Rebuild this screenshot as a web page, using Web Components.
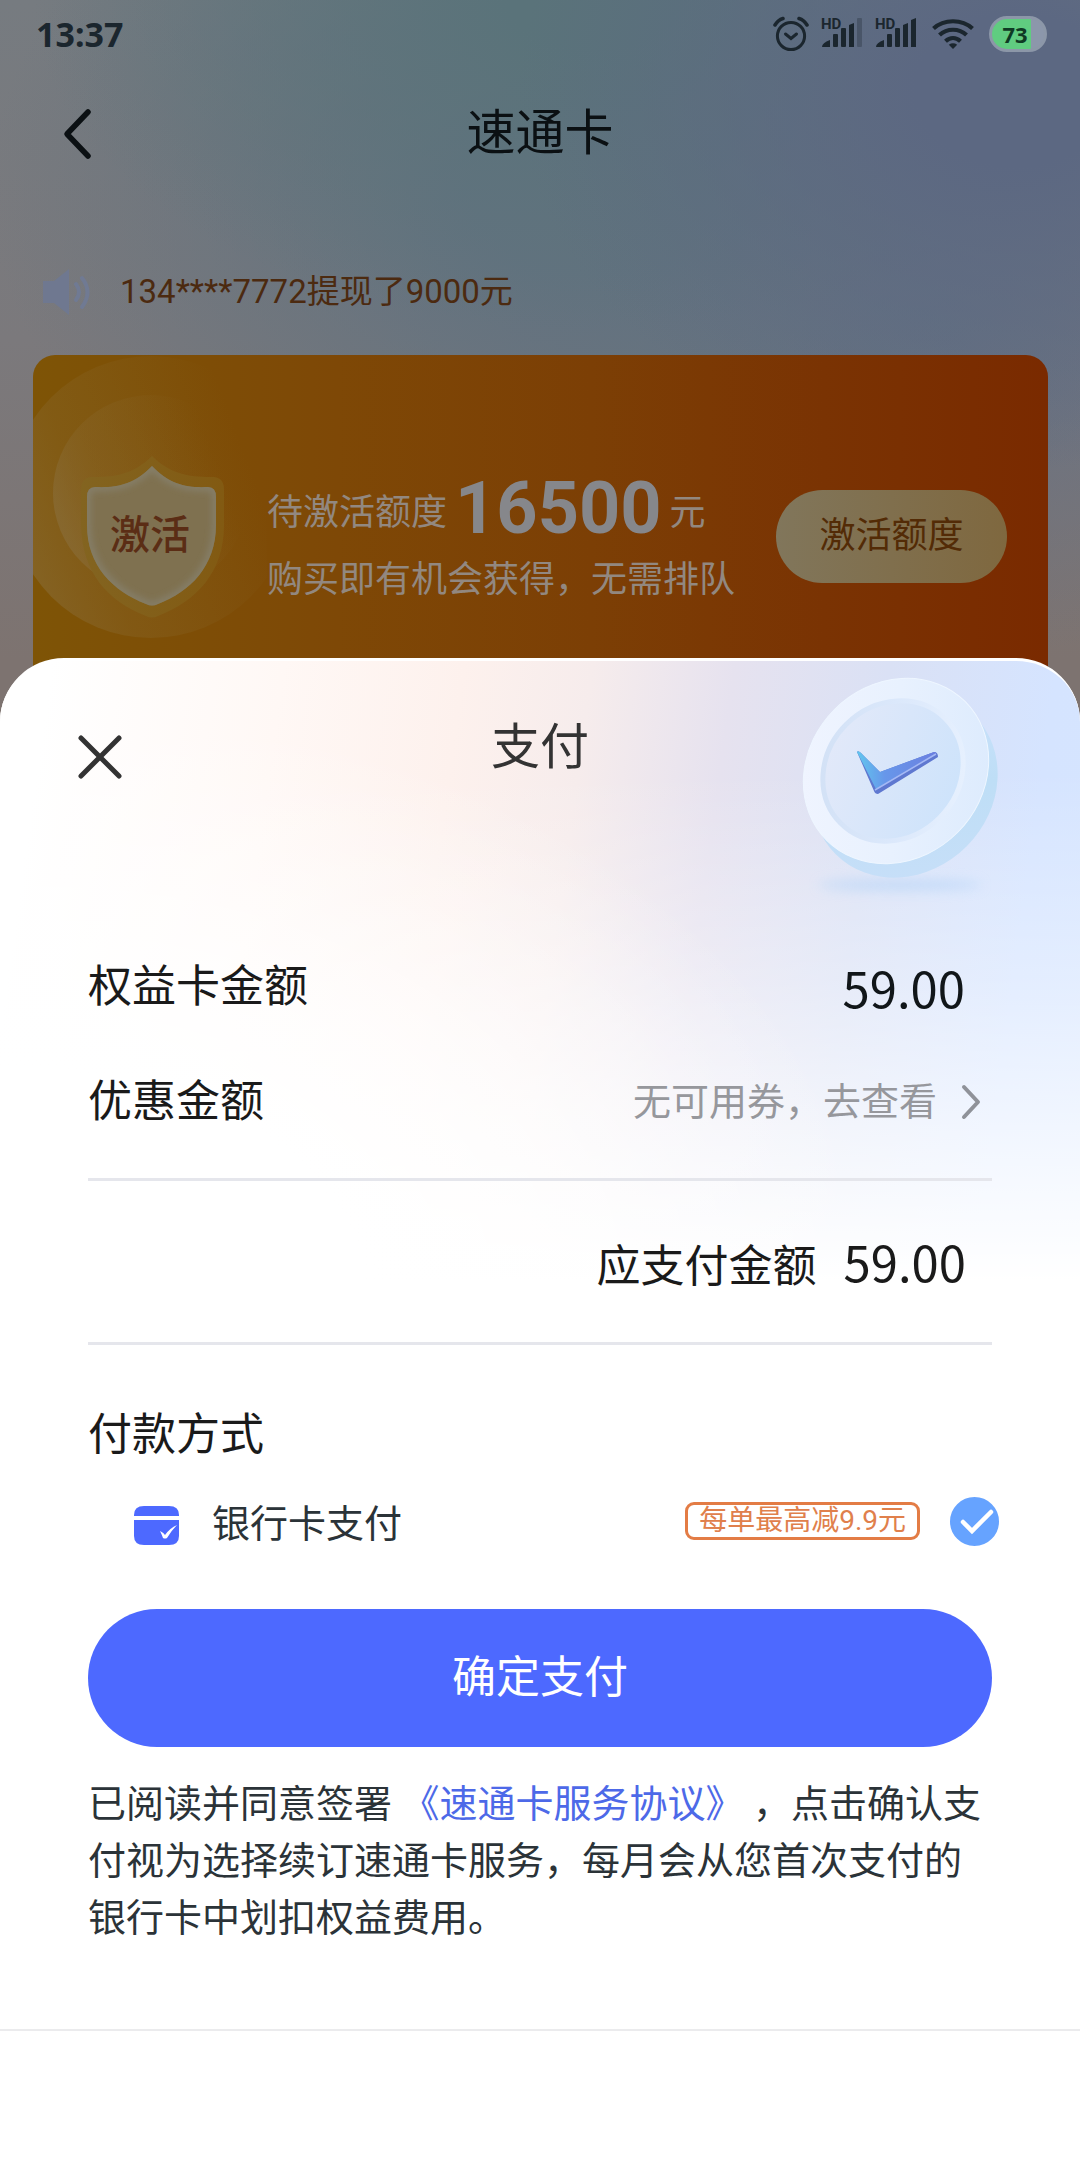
<!DOCTYPE html>
<html lang="zh-CN">
<head>
<meta charset="utf-8">
<meta name="viewport" content="width=device-width, initial-scale=1">
<title>速通卡</title>
<style>
  html, body { margin: 0; height: 100%; }
  body { font-family: Roboto, "Noto Sans CJK SC", sans-serif; text-spacing-trim: space-all; background: #fff; }
</style>
</head>
<body>
<speed-app>
  <status-bar></status-bar>
  <nav-bar>速通卡</nav-bar>
  <notice-bar>134****7772提现了9000元</notice-bar>
  <quota-card amount="16500"></quota-card>
  <pay-sheet slot="sheet" heading="支付">
    <amount-row>
      <span slot="label">权益卡金额</span>
      <span slot="value">59.00</span>
    </amount-row>
    <coupon-row label="优惠金额">无可用券，去查看</coupon-row>
    <total-row label="应支付金额">59.00</total-row>
    <pay-method heading="付款方式" tag="每单最高减9.9元">银行卡支付</pay-method>
    <confirm-button>确定支付</confirm-button>
    <pay-terms></pay-terms>
  </pay-sheet>
</speed-app>

<script>
const define = (name, render) => customElements.define(name, class extends HTMLElement {
  connectedCallback() {
    if (this.shadowRoot) return;
    this.attachShadow({ mode: "open" }).innerHTML = render(this);
  }
});

define("speed-app", () => `
<style>
  :host {
    display: block; position: relative; min-height: 100vh; overflow: hidden;
    background:
      radial-gradient(46% 380px at 94% 90px, #5c6882 20%, #5c688200),
      radial-gradient(52% 330px at 55% 0, #5a737a 15%, #5a737a00),
      radial-gradient(56% 420px at 55% 190px, #62727f 20%, #62727f00),
      radial-gradient(50% 340px at 85% 320px, #657083, #65708300),
      linear-gradient(#767b80, #7b797c 340px, #7d7370 660px);
  }
</style>
<slot></slot>
<slot name="sheet"></slot>`);

define("status-bar", () => `
<style>
  :host { display: flex; align-items: center; justify-content: space-between; height: 68px; padding: 0 33px 0 36px; color: #1b262e; }
  time { font: 700 34px/48px "Noto Sans", sans-serif; }
  .icons { display: flex; align-items: center; gap: 12px; }
  svg { display: block; }
  .battery { display: grid; place-items: center; box-sizing: border-box; width: 58px; height: 36px; border-radius: 18px; border: 3px solid #8c97a8;
    background: linear-gradient(90deg, #60cc80 75%, #8c97ab 75%); padding-right: 6px;
    font: 700 22px/30px "Noto Sans", sans-serif; color: #0f3a24; }
  .hd { font: 700 15px Roboto, sans-serif; }
</style>
<time>13:37</time>
<div class="icons">
  <svg width="36" height="36" viewBox="0 0 36 36" fill="none" stroke="#1b262e" stroke-width="3" stroke-linecap="round">
    <circle cx="18" cy="20" r="13.6"/><path d="M2 9 Q5 4 10 2.500M34 9 Q31 4 26 2.500" stroke-width="3.500"/><path d="M12.500 18 L18 22.500 L23.500 18"/>
  </svg>
  <svg width="42" height="44" viewBox="0 0 42 44" fill="#1b262e">
    <text class="hd" x="0" y="17">HD</text>
    <path d="M1 35 Q1 31 9 28 V35Z"/><rect x="12" y="22" width="5" height="13" rx="1"/><rect x="20" y="16" width="5" height="19" rx="1"/><path d="M28 13 L33 11 V35 H28Z"/><rect x="36" y="6" width="5" height="29" rx="1" opacity=".3"/>
  </svg>
  <svg width="42" height="44" viewBox="0 0 42 44" fill="#1b262e">
    <text class="hd" x="0" y="17">HD</text>
    <path d="M1 35 Q1 31 9 28 V35Z"/><rect x="12" y="22" width="5" height="13" rx="1"/><rect x="20" y="16" width="5" height="19" rx="1"/><path d="M28 13 L33 11 V35 H28Z"/><path d="M36 8 L41 6 V35 H36Z"/>
  </svg>
  <svg width="48" height="32" viewBox="0 0 48 32" fill="none" stroke="#1b262e" stroke-width="4.200">
    <path d="M4.500 10.500 C15 .8 33 .8 43.500 10.500"/><path d="M10.500 17 C18 10 30 10 37.500 17"/><path d="M16.500 23.200 C21 19 27 19 31.500 23.200"/><path d="M24 31 L19.800 26.700 Q24 23.800 28.200 26.700Z" fill="#1b262e" stroke="none"/>
  </svg>
  <div class="battery">73</div>
</div>`);

define("nav-bar", () => `
<style>
  :host { display: grid; grid-template-columns: 1fr auto 1fr; align-items: center; height: 132px; color: #0b1013; }
  h1 { margin: 0; font-size: 49px; line-height: 64px; font-weight: 400; }
  button { justify-self: start; margin-left: 48px; width: 58px; height: 64px; padding: 0; border: 0; background: none; display: grid; place-items: center; color: inherit; }
</style>
<button type="button" aria-label="返回">
  <svg width="30" height="52" viewBox="0 0 30 52" fill="none" stroke="currentColor" stroke-width="5.500" stroke-linecap="round" stroke-linejoin="round"><path d="M26 4 L5 26 L26 48"/></svg>
</button>
<h1><slot></slot></h1>`);

define("notice-bar", () => `
<style>
  :host { display: flex; align-items: center; gap: 28px; margin: 64px 40px 35px; height: 56px; font-size: 33px; line-height: 48px; color: #4c2a10; }
</style>
<svg width="52" height="50" viewBox="0 0 52 50" fill="none" stroke="#707a93" stroke-width="4" stroke-linecap="round">
  <path d="M3 14 H14 L29 2 V48 L14 36 H3Z" fill="#6f7890" stroke="none"/>
  <path d="M36 17 Q42 25 36 33M42 11 Q53 25 42 40"/>
</svg>
<span><slot></slot></span>`);

define("quota-card", el => `
<style>
  :host { display: flex; align-items: center; margin: 0 32px 0 33px; height: 362px; padding-right: 41px; border-radius: 22px; overflow: hidden;
    background: linear-gradient(90deg, #7e5406, #7e4806 30%, #7c3f05 55%, #7a3303 78%, #7a2a00); }
  .shield { flex: none; display: grid; place-items: center; width: 234px; height: 362px; }
  .shield > * { grid-area: 1 / 1; }
  .shield b { font-size: 40px; line-height: 50px; font-weight: 500; color: #5b2d15; }
  .info { padding-bottom: 4px; font-family: "Noto Sans CJK SC", sans-serif; font-size: 36px; line-height: 50px; color: #928880; white-space: nowrap; }
  .quota { display: flex; align-items: center; gap: 8px; height: 84px; }
  .quota strong { font: 700 72px/84px Roboto, sans-serif; color: #86878b; }
  button { margin-left: auto; width: 231px; height: 93px; padding: 0; border: 0; border-radius: 47px; background: linear-gradient(90deg, #81765b, #7f683f);
    font: 400 36px/50px Roboto, "Noto Sans CJK SC", sans-serif; color: #532b06; }
</style>
<div class="shield">
  <svg width="234" height="362" viewBox="0 0 234 362">
    <defs>
      <linearGradient id="ring" x1="0" y1=".55" x2=".8" y2=".25"><stop offset="0" stop-color="#8c7446" stop-opacity=".45"/><stop offset=".3" stop-color="#8a6a30" stop-opacity=".32"/><stop offset="1" stop-color="#8a6a30" stop-opacity="0"/></linearGradient>
      <linearGradient id="hem" x1="0" y1="0" x2="1" y2="0"><stop offset="0" stop-color="#836420"/><stop offset="1" stop-color="#825a12"/></linearGradient>
      <clipPath id="cut"><path d="M119 111 C137 130 155 133 175 132 Q183 132 183 142 V170 C183 211 157 237 125 249 Q119 252 113 249 C80 236 54 211 54 170 V142 Q54 132 62 132 C82 133 101 130 119 111Z"/></clipPath>
      <filter id="soft"><feGaussianBlur stdDeviation="3"/></filter>
    </defs>
    <circle cx="118" cy="142" r="141" fill="url(#ring)"/>
    <circle cx="118" cy="138" r="98" fill="url(#ring)"/>
    <path d="M119 101 C139 121 160 122 181 122 Q191 123 191 135 V170 C191 218 163 246 125 261 Q119 264 113 261 C75 246 49 218 48 170 V135 Q48 123 58 122 C79 122 99 121 119 101Z" fill="url(#hem)"/>
    <g clip-path="url(#cut)">
      <path d="M40 90 H200 V270 H40Z" fill="#7f7150"/>
      <path d="M119 111 C137 130 155 133 175 132 Q183 132 183 142 V170 C183 211 157 237 125 249 Q119 252 113 249 C80 236 54 211 54 170 V142 Q54 132 62 132 C82 133 101 130 119 111Z" fill="none" stroke="#857e68" stroke-width="8" filter="url(#soft)"/>
    </g>
  </svg>
  <b>激活</b>
</div>
<div class="info">
  <div class="quota"><span>待激活额度</span><strong>${el.getAttribute("amount")}</strong><span>元</span></div>
  <div>购买即有机会获得，无需排队</div>
</div>
<button type="button">激活额度</button>`);

define("pay-sheet", el => `
<style>
  :host { display: block; position: absolute; left: 0; right: 0; bottom: 0; box-sizing: border-box; border-top: 3px solid #fff; border-radius: 64px 64px 0 0; overflow: hidden; color: #1a1a1a;
    background:
      radial-gradient(78% 600px at 4% 640px, #fff 38%, #fff0),
      linear-gradient(#fff0, #fff0 110px, #ffffff59 320px, #fff 620px),
      linear-gradient(98deg, #fff 4%, #fff8f5 22%, #fdf1ed 36%, #f6ecec 46%, #e6e2ef 57%, #dae1f5 69%, #d5e4ff 82%, #d6e6ff) #fff; }
  header { display: grid; grid-template-columns: 1fr auto 1fr; align-items: start; padding-top: 55px; height: 213px; color: #333; }
  h2 { margin: 0; font-size: 49px; line-height: 64px; font-weight: 400; }
  button { justify-self: start; margin-left: 68px; width: 64px; height: 82px; padding: 0; border: 0; background: none; display: grid; place-items: center; color: inherit; }
  .medal { position: absolute; top: 11px; right: 64px; }
  main { padding: 0 88px; }
  footer { margin-top: 82px; height: 129px; border-top: 2px solid #ebebed; }
</style>
<svg class="medal" width="216" height="234" viewBox="0 0 216 234" aria-hidden="true">
  <defs>
    <linearGradient id="rim" x1="0" y1="0" x2="1" y2="1"><stop offset="0" stop-color="#f2f5ff"/><stop offset=".5" stop-color="#e8f1fe"/><stop offset="1" stop-color="#d9e9fd"/></linearGradient>
    <linearGradient id="edge" x1="0" y1="1" x2="1" y2="0"><stop offset="0" stop-color="#c9dff9"/><stop offset=".5" stop-color="#bedef6"/><stop offset="1" stop-color="#d0e3fe"/></linearGradient>
    <linearGradient id="dish" x1=".2" y1="0" x2=".7" y2="1"><stop offset="0" stop-color="#e3e9f9"/><stop offset="1" stop-color="#cde3fb"/></linearGradient>
    <linearGradient id="lip" x1="0" y1="0" x2="1" y2="1"><stop offset="0" stop-color="#d0dff4"/><stop offset=".5" stop-color="#dbe8fb"/><stop offset="1" stop-color="#eaf3ff"/></linearGradient>
    <linearGradient id="tick" x1="0" y1="0" x2="1" y2="0"><stop offset="0" stop-color="#62c6ee"/><stop offset=".35" stop-color="#6797ea"/><stop offset="1" stop-color="#6b7fe0"/></linearGradient>
    <filter id="haze" x="-20%" y="-100%" width="140%" height="300%"><feGaussianBlur stdDeviation="6"/></filter>
  </defs>
  <ellipse cx="100" cy="213" rx="82" ry="6" fill="#b5d4f7" opacity=".6" filter="url(#haze)"/>
  <ellipse cx="105" cy="113" rx="98" ry="87" transform="rotate(-45 105 113)" fill="url(#edge)"/>
  <ellipse cx="96" cy="99" rx="98" ry="87" transform="rotate(-45 96 99)" fill="url(#rim)" stroke="#eef6ff" stroke-width="1"/>
  <ellipse cx="93" cy="99" rx="74" ry="66" transform="rotate(-45 93 99)" fill="url(#dish)" stroke="url(#lip)" stroke-width="5"/>
  <path d="M57 80 Q58 78 61 81 L80 100 L134 80 Q138 80 138 85 L78 122 Q75 122 74 119Z" fill="#5f78d0"/>
  <path d="M57 80 Q58 78 61 81 L80 100 L134 80 Q137 80 136 82 L76 117Z" fill="url(#tick)"/>
  <path d="M75 118 L136 82" stroke="#a5b9f5" stroke-width="1.500"/>
</svg>
<header>
  <button type="button" aria-label="关闭">
    <svg width="46" height="46" viewBox="0 0 46 46" fill="none" stroke="currentColor" stroke-width="5" stroke-linecap="round"><path d="M4 4 L42 42M42 4 L4 42"/></svg>
  </button>
  <h2>${el.getAttribute("heading")}</h2>
</header>
<main><slot></slot></main>
<footer></footer>`);

define("amount-row", () => `
<style>
  :host { display: flex; align-items: center; justify-content: space-between; height: 115px; padding-right: 27px; font-size: 44px; line-height: 60px; }
  ::slotted([slot="value"]) { font: 400 49px/60px "Noto Sans CJK SC", sans-serif; color: #111619; }
</style>
<slot name="label"></slot><slot name="value"></slot>`);

define("coupon-row", el => `
<style>
  :host { display: flex; align-items: center; justify-content: space-between; height: 115px; padding: 0 11px 19px 0; font-size: 44px; line-height: 60px; border-bottom: 3px solid #e5e6ec; }
  a { display: flex; align-items: center; gap: 24px; font-size: 38px; color: #96979c; text-decoration: none; }
</style>
<span>${el.getAttribute("label")}</span>
<a href="#coupons"><slot></slot>
  <svg width="20" height="36" viewBox="0 0 20 36" fill="none" stroke="#8f9299" stroke-width="4" stroke-linecap="round" stroke-linejoin="round"><path d="M3 3 L17 18 L3 33"/></svg>
</a>`);

define("total-row", el => `
<style>
  :host { display: flex; align-items: baseline; justify-content: flex-end; gap: 27px; padding: 50px 26px 45px 0; font-size: 44px; line-height: 60px; border-bottom: 3px solid #e5e6ec; }
  output { font: 400 49px/60px "Noto Sans CJK SC", sans-serif; }
</style>
<span>${el.getAttribute("label")}</span><output><slot></slot></output>`);

define("pay-method", el => `
<style>
  :host { display: block; padding-top: 60px; }
  h3 { margin: 0 0 24px; font-size: 44px; line-height: 60px; font-weight: 400; }
  label { display: flex; align-items: center; height: 64px; margin-right: -7px; padding-left: 46px; }
  .name { margin-left: 33px; font: 400 38px/56px "Noto Sans CJK SC", sans-serif; color: #2b3338; }
  .tag { margin: 0 30px 0 auto; padding: 0 11px; border: 3px solid #e37c45; border-radius: 9px; font-size: 28px; line-height: 32px; color: #e0804c; }
  .pick { display: grid; }
  .pick > * { grid-area: 1 / 1; }
  input { appearance: none; margin: 0; width: 49px; height: 49px; border-radius: 50%; border: 2px solid #66a3ff; }
  input:checked { background: #66a3ff; }
  input:not(:checked) + svg { visibility: hidden; }
  .pick svg { pointer-events: none; }
</style>
<h3>${el.getAttribute("heading")}</h3>
<label>
  <svg width="45" height="48" viewBox="0 0 45 48">
    <path d="M0 19 V18 Q0 9 10 9 H35 Q45 9 45 18 V19Z" fill="#4d69ff"/>
    <path d="M0 23 H45 V39 Q45 48 35 48 H10 Q0 48 0 39Z" fill="#4d69ff"/>
    <path d="M26 34 Q30 36 31 38 Q36 31 43 28 Q37 34 33 41 Q31 42 29 41 Q28 38 26 34Z" fill="#fff"/>
  </svg>
  <span class="name"><slot></slot></span>
  <span class="tag">${el.getAttribute("tag")}</span>
  <span class="pick">
    <input type="radio" name="method" checked>
    <svg width="49" height="49" viewBox="0 0 49 49" fill="none" stroke="#fff" stroke-width="4.500" stroke-linecap="round"><path d="M13 25 L22 34 L41 15"/></svg>
  </span>
</label>`);

define("confirm-button", () => `
<style>
  :host { display: block; margin-top: 56px; }
  button { display: block; width: 100%; height: 138px; padding: 0; border: 0; border-radius: 69px; background: #4d69ff; color: #fff; font: 400 44px/60px Roboto, "Noto Sans CJK SC", sans-serif; }
</style>
<button type="button"><slot></slot></button>`);

define("pay-terms", () => `
<style>
  :host { display: block; margin-top: 29px; font-size: 38px; line-height: 57px; color: #2b3338; }
  p { margin: 0; }
  a { color: #4d69e8; text-decoration: none; }
</style>
<p>已阅读并同意签署 <a href="#agreement">《速通卡服务协议》</a> ，点击确认支付视为选择续订速通卡服务，每月会从您首次支付的银行卡中划扣权益费用。</p>`);
</script>
</body>
</html>
